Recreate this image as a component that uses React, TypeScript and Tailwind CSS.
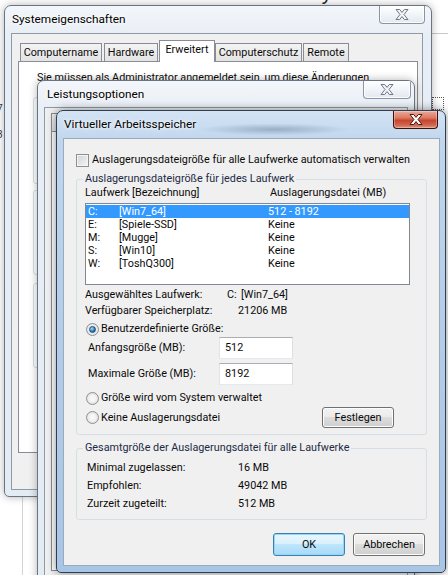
import React from 'react';

const drives = [
  ['C:', '[Win7_64]', '512 - 8192'],
  ['E:', '[Spiele-SSD]', 'Keine'],
  ['M:', '[Mugge]', 'Keine'],
  ['S:', '[Win10]', 'Keine'],
  ['W:', '[ToshQ300]', 'Keine'],
];

const CloseX: React.FC<{ active?: boolean }> = ({ active }) => (
  <svg width="14" height="11" viewBox="0 0 14 11" className="block">
    <path
      d="M1 .5h3.7L7 3.4 9.3.5H13L9 5.5l4 5H9.3L7 7.6l-2.3 2.9H1l4-5z"
      fill={active ? '#ffffff' : '#f1f3f6'}
      stroke={active ? '#471c14' : '#6f7a88'}
      strokeLinejoin="round"
    />
  </svg>
);

const CloseButton: React.FC<{ active?: boolean; className: string }> = ({ active, className }) => (
  <div
    className={`flex h-[18px] items-center justify-center rounded-b-[4px] border border-t-0 ${
      active
        ? 'border-[#3d1109] bg-[linear-gradient(180deg,#ecaa9b_0%,#dc7a64_40%,#c8442d_55%,#d0614a_80%,#e0907c_100%)] shadow-[inset_0_0_0_1px_rgba(255,255,255,0.3)]'
        : 'border-[#8a95a3] bg-[linear-gradient(180deg,#ffffff_0%,#f1f4f8_50%,#e4e9ef_100%)] shadow-[inset_0_0_0_1px_rgba(255,255,255,0.8)]'
    } ${className}`}
  >
    <CloseX active={active} />
  </div>
);

type WindowProps = {
  className: string;
  active?: boolean;
  title: string;
  barClass: string;
  titleClass: string;
  closeClass: string;
  children: React.ReactNode;
};

const Window: React.FC<WindowProps> = ({ className, active, title, barClass, titleClass, closeClass, children }) => (
  <div
    className={`absolute isolate flex flex-col overflow-hidden rounded-t-[7px] rounded-b-[5px] border ${
      active
        ? 'border-[#2f3f52] bg-[linear-gradient(180deg,#d3e3f4_0px,#c0d6ee_30px,#b3cce8_50%,#a9c5e6_100%)] shadow-[0_0_10px_rgba(0,0,0,0.45)]'
        : 'border-[#6a7584] bg-[linear-gradient(180deg,#f3f6fa_0px,#e8eef5_30px,#e3ebf3_100%)] shadow-[0_0_8px_rgba(0,0,0,0.3)]'
    } ${className}`}
  >
    <div className={`flex shrink-0 items-start ${barClass}`}>
      <span className={`pt-[6px] text-[11.8px] leading-[14px] text-black [text-shadow:0_0_6px_#fff,0_0_3px_#fff] ${titleClass}`}>
        {title}
      </span>
      <CloseButton active={active} className={`ml-auto ${closeClass}`} />
    </div>
    {children}
  </div>
);

const Tab: React.FC<{ label?: string; active?: boolean; className: string }> = ({ label, active, className }) => (
  <div
    className={`flex shrink-0 items-center justify-center whitespace-nowrap border border-b-0 border-[#898c95] ${
      active ? 'relative z-10 h-[22px] bg-white pb-[3px]' : 'mb-[1px] h-[18px] bg-[linear-gradient(180deg,#f3f3f3,#e3e3e3)]'
    } ${className}`}
  >
    {label}
  </div>
);

const Check = () => (
  <span className="block h-[13px] w-[13px] shrink-0 border border-[#8e8f8f] bg-[linear-gradient(135deg,#cfd2d6,#f6f6f6)] shadow-[inset_0_0_0_1px_#f4f4f4]" />
);

const Radio: React.FC<{ on?: boolean }> = ({ on }) => (
  <span className="flex h-[13px] w-[13px] shrink-0 items-center justify-center rounded-full border border-[#8e8f8f] bg-[radial-gradient(circle,#f7f7f7_30%,#d3d5d9_100%)]">
    {on && (
      <span className="block h-[7px] w-[7px] rounded-full border border-[#1f4b73] bg-[radial-gradient(circle_at_35%_30%,#a6e0fc,#2a7ac0_60%,#16466f)]" />
    )}
  </span>
);

const Btn: React.FC<{ def?: boolean; className: string; children: React.ReactNode }> = ({ def, className, children }) => (
  <button
    type="button"
    className={`flex items-center justify-center rounded-[3px] border ${
      def
        ? 'border-[#3c7fb1] bg-[linear-gradient(180deg,#eaf6fd_0%,#d9f0fc_49%,#bee6fd_50%,#a7d9f5_100%)] shadow-[inset_0_0_0_1px_#8fd8f8]'
        : 'border-[#707070] bg-[linear-gradient(180deg,#f2f2f2_0%,#ebebeb_49%,#dddddd_50%,#cfcfcf_100%)] shadow-[inset_0_0_0_1px_#fcfcfc]'
    } ${className}`}
  >
    {children}
  </button>
);

const TextBox: React.FC<{ value: string }> = ({ value }) => (
  <div className="flex h-[22px] w-[74px] items-center border border-[#abadb3] border-b-[#e3e9ef] border-l-[#e2e3ea] border-r-[#dbdfe6] bg-white pl-[5px]">
    {value}
  </div>
);

export default function App() {
  return (
    <div className="relative h-[575px] w-[448px] overflow-hidden bg-white text-[10.8px] leading-[14px] text-[#0a0a0a] [font-family:Roboto,'Noto_Sans',sans-serif]">
      {/* page behind the dialogs */}
      <div className="absolute left-[36px] top-[-17px] whitespace-nowrap text-[20px] leading-[20px] text-[#222] [font-family:'Liberation_Sans',sans-serif]">
        Meine Liste hier hat auch 32 GByte RAM und
      </div>
      <div className="absolute left-[-3px] top-[102px] text-[10px] text-[#333]">7</div>
      <div className="absolute left-[-3px] top-[128px] text-[10px] text-[#333]">3</div>
      <div className="absolute left-[432px] top-[33px] h-px w-[16px] bg-[#c8c8c8]" />
      <div className="absolute left-[432px] top-[97px] h-[13px] w-[12px] border border-dotted border-[#555]" />
      <div className="absolute left-[22px] top-[497px] h-[78px] w-px bg-[#d4d4d4]" />

      {/* Systemeigenschaften */}
      <Window
        className="left-[4px] top-[5px] h-[492px] w-[428px]"
        title="Systemeigenschaften"
        barClass="h-[27px]"
        titleClass="pl-[7px]"
        closeClass="mr-[6px] w-[46px]"
      >
        <div className="ml-[6px] flex h-[457px] w-[412px] flex-col border border-[#8e9aa8] bg-[#f0f0f0]">
          <div className="ml-[6px] mt-[6px] flex h-[22px] items-end">
            <Tab label="Computername" className="ml-[2px] w-[82px]" />
            <Tab label="Hardware" className="ml-[2px] w-[54px]" />
            <Tab label="Erweitert" active className="ml-[1px] w-[56px]" />
            <Tab label="Computerschutz" className="w-[87px]" />
            <Tab label="Remote" className="ml-[1px] w-[46px]" />
          </div>
          <div className="-mt-[1px] ml-[6px] h-[392px] w-[400px] border border-[#898c95] bg-white pl-[18px] pt-[9px]">
            <p className="h-[28px] whitespace-nowrap">Sie müssen als Administrator angemeldet sein, um diese Änderungen</p>
            <fieldset className="-ml-[4px] -mt-[2px] h-[87px] w-[362px] rounded-[3px] border border-[#d5dfe5]" />
            <fieldset className="-ml-[4px] mt-[6px] h-[85px] w-[362px] rounded-[3px] border border-[#d5dfe5]" />
            <fieldset className="-ml-[4px] mt-[8px] h-[85px] w-[362px] rounded-[3px] border border-[#d5dfe5]" />
          </div>
        </div>
      </Window>

      {/* Leistungsoptionen */}
      <Window
        className="left-[37px] top-[80px] h-[520px] w-[378px]"
        title="Leistungsoptionen"
        barClass="h-[26px]"
        titleClass="pl-[9px]"
        closeClass="mr-[3px] w-[48px]"
      >
        <div className="ml-[6px] flex h-[480px] w-[364px] flex-col border border-[#8e9aa8] bg-[#f0f0f0]">
          <div className="ml-[6px] mt-[2px] flex h-[22px] items-end">
            <Tab className="w-[90px]" />
            <Tab active className="w-[60px]" />
            <Tab className="w-[160px]" />
          </div>
          <div className="-mt-[1px] ml-[6px] h-[440px] w-[350px] border border-[#898c95] bg-white" />
        </div>
      </Window>

      {/* Virtueller Arbeitsspeicher */}
      <Window
        active
        className="left-[56px] top-[110px] h-[463px] w-[390px]"
        title="Virtueller Arbeitsspeicher"
        barClass="h-[27px] bg-[radial-gradient(ellipse_75px_6px_at_56%_68%,rgba(70,90,120,0.35),transparent)]"
        titleClass="pl-[7px]"
        closeClass="mr-[7px] w-[45px]"
      >
        <div className="ml-[6px] flex h-[428px] w-[377px] flex-col border border-[#9aabbd] bg-[#f0f0f0]">
          <div className="ml-[12px] mt-[13px] flex h-[16px] items-center">
            <Check />
            <span className="ml-[3px] whitespace-nowrap">Auslagerungsdateigröße für alle Laufwerke automatisch verwalten</span>
          </div>

          <fieldset className="ml-[12px] mt-[4px] w-[351px] rounded-[3px] border border-[#d5dfe5]">
            <legend className="ml-[6px] px-[2px] text-[#1c2a45]">Auslagerungsdateigröße für jedes Laufwerk</legend>
            <div className="flex flex-col px-[8px] pb-[6px]">
              <div className="flex h-[14px] items-center whitespace-nowrap">
                <span className="w-[185px]">Laufwerk [Bezeichnung]</span>
                <span>Auslagerungsdatei (MB)</span>
              </div>
              <div className="mt-[3px] h-[82px] w-[325px] border border-[#828790] bg-white pt-[1px]">
                {drives.map(([drive, name, size], i) => (
                  <div
                    key={drive}
                    className={`flex h-[13px] items-center pl-[2px] leading-[13px] ${i === 0 ? 'bg-[#3399ff] text-white' : ''}`}
                  >
                    <span className="w-[31px]">{drive}</span>
                    <span className="w-[149px]">{name}</span>
                    <span>{size}</span>
                  </div>
                ))}
              </div>
              <div className="mt-[2px] flex h-[16px] items-center">
                <span className="w-[142px]">Ausgewähltes Laufwerk:</span>
                <span className="w-[14px]">C:</span>
                <span>[Win7_64]</span>
              </div>
              <div className="flex h-[16px] items-center">
                <span className="w-[153px]">Verfügbarer Speicherplatz:</span>
                <span>21206 MB</span>
              </div>
              <div className="ml-[1px] mt-[2px] flex h-[16px] items-center">
                <Radio on />
                <span className="ml-[2px]">Benutzerdefinierte Größe:</span>
              </div>
              <div className="flex h-[22px] items-center">
                <span className="ml-[3px] w-[131px]">Anfangsgröße (MB):</span>
                <TextBox value="512" />
              </div>
              <div className="mt-[4px] flex h-[22px] items-center">
                <span className="ml-[3px] w-[131px]">Maximale Größe (MB):</span>
                <TextBox value="8192" />
              </div>
              <div className="ml-[1px] mt-[5px] flex h-[16px] items-center">
                <Radio />
                <span className="ml-[2px]">Größe wird vom System verwaltet</span>
              </div>
              <div className="mt-[1px] flex h-[21px] items-center">
                <div className="flex w-[237px] items-center pl-[1px]">
                  <Radio />
                  <span className="ml-[2px]">Keine Auslagerungsdatei</span>
                </div>
                <Btn className="h-[21px] w-[72px]">Festlegen</Btn>
              </div>
            </div>
          </fieldset>

          <fieldset className="ml-[12px] mt-[6px] w-[351px] rounded-[3px] border border-[#d5dfe5]">
            <legend className="ml-[6px] px-[2px] text-[#1c2a45]">Gesamtgröße der Auslagerungsdatei für alle Laufwerke</legend>
            <div className="flex flex-col pb-[6px] pl-[10px] pt-[4px]">
              <div className="flex h-[18px] items-center">
                <span className="w-[151px]">Minimal zugelassen:</span>
                <span>16 MB</span>
              </div>
              <div className="flex h-[18px] items-center">
                <span className="w-[151px]">Empfohlen:</span>
                <span>49042 MB</span>
              </div>
              <div className="flex h-[18px] items-center">
                <span className="w-[151px]">Zurzeit zugeteilt:</span>
                <span>512 MB</span>
              </div>
            </div>
          </fieldset>

          <div className="mt-[13px] flex justify-end gap-[8px] pr-[14px]">
            <Btn def className="h-[23px] w-[72px]">OK</Btn>
            <Btn className="h-[23px] w-[72px]">Abbrechen</Btn>
          </div>
        </div>
      </Window>
    </div>
  );
}
